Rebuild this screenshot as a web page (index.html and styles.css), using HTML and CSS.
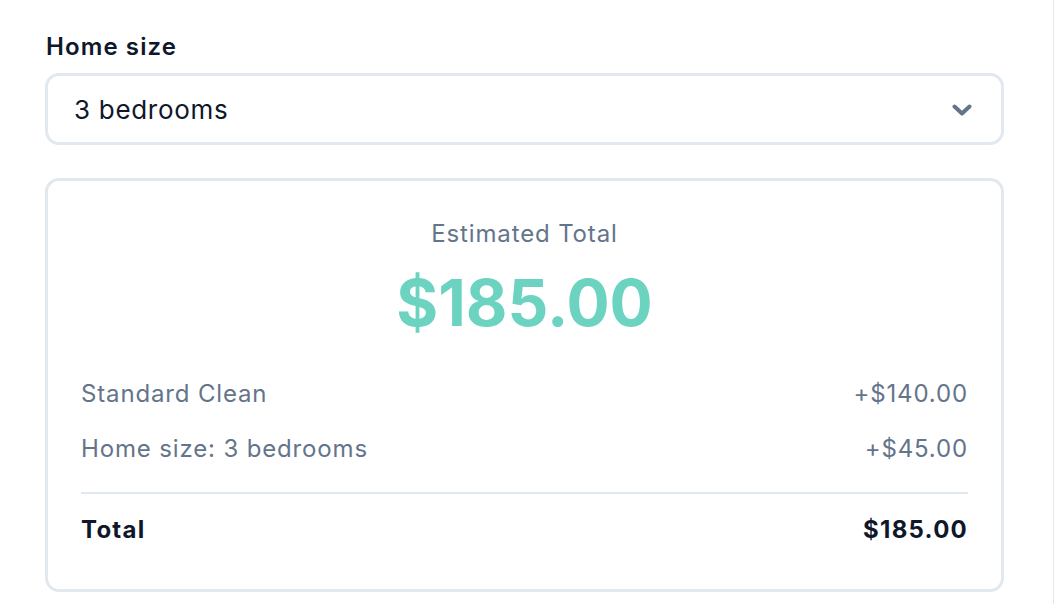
FILE: index.html
```html
<!DOCTYPE html>
<html lang="en">
<head>
    <meta charset="UTF-8">
    <meta name="viewport" content="width=device-width, initial-scale=1.0">
    <title>Booking estimate</title>
    <link rel="stylesheet" href="styles.css">
</head>
<body>
    <div class="page">
        <!-- home size picker -->
        <label class="field-label" for="homeSize">Home size</label>
        <div class="select">
            <span class="select-value" id="homeSize">3 bedrooms</span>
            <svg class="select-arrow" width="20" height="12" viewBox="0 0 20 12">
                <polyline points="2.5,2.5 10,9.5 17.5,2.5" fill="none" stroke="#64748b" stroke-width="4" stroke-linecap="round" stroke-linejoin="round"/>
            </svg>
        </div>

        <!-- estimate card -->
        <div class="summary">
            <div class="summary-title">Estimated Total</div>
            <div class="summary-amount">$185.00</div>

            <div class="line-items">
                <div class="line-item">
                    <span>Standard Clean</span>
                    <span>+$140.00</span>
                </div>
                <div class="line-item">
                    <span>Home size: 3 bedrooms</span>
                    <span>+$45.00</span>
                </div>
            </div>

            <div class="total-row">
                <span>Total</span>
                <span>$185.00</span>
            </div>
        </div>
    </div>
</body>
</html>
```

FILE: styles.css
```css
html, body {
    margin: 0;
    padding: 0;
    background-color: #ffffff;
}

/* 右端の細い区切り線 */
body {
    font-family: Inter, "Noto Sans", sans-serif;
    color: #111827;
    border-right: 1px solid #e5e7eb;
    width: 1053px;
    height: 604px;
    overflow: hidden;
}

.page {
    width: 959px;
    height: 604px;
    box-sizing: border-box;
    padding: 29px 0 0 0;
    margin-left: 45px;
}

.field-label {
    display: block;
    font-size: 24px;
    line-height: 36px;
    font-weight: 600;
    letter-spacing: 1.1px;
    color: #0f172a;
    padding-left: 1px;
    margin-bottom: 8px;
}

.select {
    height: 72px;
    box-sizing: border-box;
    border: 3px solid #e2e8f0;
    border-radius: 14px;
    display: flex;
    align-items: center;
    justify-content: space-between;
    padding: 0 29px 0 26px;
}

.select-value {
    font-size: 26px;
    line-height: 36px;
    letter-spacing: 0.7px;
    color: #0f172a;
    padding-top: 2px;
}

.select-arrow {
    display: block;
    margin-top: 2px;
}

.summary {
    margin-top: 33px;
    border: 3px solid #e2e8f0;
    border-radius: 14px;
    padding: 35px 33px 42px 33px;
    height: 414px;
    box-sizing: border-box;
}

.summary-title {
    text-align: center;
    font-size: 24px;
    line-height: 36px;
    letter-spacing: 0.85px;
    color: #64748b;
}

.summary-amount {
    text-align: center;
    font-size: 64px;
    line-height: 64px;
    font-weight: 700;
    color: #6bd3c0;
    margin-top: 19px;
}

.line-items {
    margin-top: 41px;
    display: flex;
    flex-direction: column;
    gap: 19px;
}

.line-item,
.total-row {
    display: flex;
    justify-content: space-between;
    font-size: 24px;
    line-height: 36px;
}

.line-item {
    color: #64748b;
    letter-spacing: 0.85px;
}

.total-row {
    margin-top: 25px;
    padding-top: 18px;
    border-top: 2px solid #e2e8f0;
    font-weight: 700;
    letter-spacing: 1.25px;
    color: #0f172a;
}
```
